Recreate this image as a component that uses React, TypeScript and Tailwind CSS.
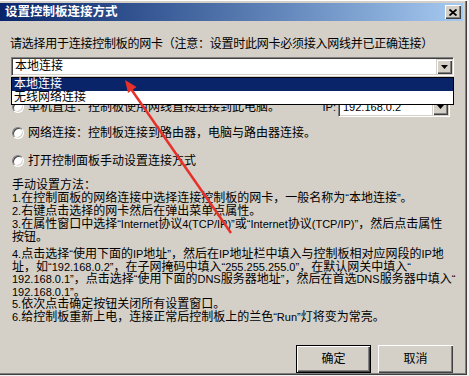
import React from "react";

const T = ({ s }: { s: string }) => {
  const parts = s.split(/([\x20-\x7E“”]+)/);
  return (
    <>
      {parts.map((p, i) =>
        i % 2 === 1 ? (
          <span key={i} className="text-[11px]">
            {p}
          </span>
        ) : (
          <React.Fragment key={i}>{p}</React.Fragment>
        )
      )}
    </>
  );
};

const DropBtn = () => (
  <div className="w-[16px] h-full bg-[#d4d0c8] flex items-center justify-center shadow-[inset_1px_1px_0_#d4d0c8,inset_2px_2px_0_#ffffff,inset_-1px_-1px_0_#404040,inset_-2px_-2px_0_#808080]">
    <svg width="7" height="4" viewBox="0 0 7 4">
      <path d="M0 0H7L3.5 4Z" fill="#000" />
    </svg>
  </div>
);

const Radio = () => (
  <div className="w-[12px] h-[12px] rounded-full bg-white border border-t-[#808080] border-l-[#808080] border-r-white border-b-white shadow-[inset_1px_1px_0_#404040,inset_-1px_-1px_0_#d4d0c8] shrink-0" />
);

export default function App() {
  return (
    <div className="w-[469px] h-[376px] relative overflow-hidden bg-[#f2f2f2] text-black text-[12px] font-['Liberation_Sans','Noto_Sans_CJK_SC',sans-serif]">
      <div className="w-[467px] h-[375px] bg-[#d4d0c8] flex flex-col shadow-[inset_0_1px_0_#ffffff,inset_-1px_-1px_0_#404040,inset_-2px_-2px_0_#808080]">
        <div className="h-[3px]" />
        {/* Title bar */}
        <div className="h-[18px] mr-[4px] bg-linear-to-r from-[#0a246a] to-[#a6caf0] flex items-center justify-between pl-[5px] pr-[2px]">
          <span className="text-white font-bold text-[12.5px] leading-[18px]">设置控制板连接方式</span>
          <div className="w-[16px] h-[14px] bg-[#d4d0c8] flex items-center justify-center shadow-[inset_1px_1px_0_#ffffff,inset_-1px_-1px_0_#404040,inset_-2px_-2px_0_#808080]">
            <svg width="8" height="7" viewBox="0 0 8 7">
              <path d="M0.5 0.5L7.5 6.5M7.5 0.5L0.5 6.5" stroke="#000" strokeWidth="1.8" />
            </svg>
          </div>
        </div>

        {/* Body */}
        <div className="flex flex-col pl-[11px]">
          <div className="mt-[16px] h-[14px] leading-[14px] -ml-[1px] tracking-[-0.25px] whitespace-nowrap">
            请选择用于连接控制板的网卡（注意：设置时此网卡必须接入网线并已正确连接）
          </div>

          {/* Combo */}
          <div className="mt-[6px] w-[443px] h-[19px] bg-white flex items-stretch border border-t-[#808080] border-l-[#808080] border-b-white border-r-white shadow-[inset_1px_1px_0_#404040,inset_-1px_-1px_0_#d4d0c8] p-[1px]">
            <div className="flex-1 pl-[2px] leading-[15px]">本地连接</div>
            <DropBtn />
          </div>

          {/* Radio 1 */}
          <div className="mt-[21px] w-[439px] h-[20px] flex items-center justify-between">
            <div className="flex items-center gap-[4px] ml-[1px]">
              <Radio />
              <span className="whitespace-nowrap">单机直连：控制板使用网线直接连接到此电脑。</span>
            </div>
            <div className="flex items-center gap-[2px] h-full">
              <span className="text-[11px]">IP:</span>
              <div className="w-[112px] h-[20px] bg-white flex items-stretch border border-t-[#808080] border-l-[#808080] border-b-white border-r-white shadow-[inset_1px_1px_0_#404040,inset_-1px_-1px_0_#d4d0c8] p-[1px]">
                <div className="flex-1 pl-[3px] text-[11px] leading-[16px]">192.168.0.2</div>
                <DropBtn />
              </div>
            </div>
          </div>

          {/* Radio 2 */}
          <div className="mt-[9px] h-[14px] flex items-center gap-[4px] ml-[1px]">
            <Radio />
            <span className="whitespace-nowrap leading-[14px]">网络连接：控制板连接到路由器，电脑与路由器连接。</span>
          </div>

          {/* Radio 3 */}
          <div className="mt-[14px] h-[14px] flex items-center gap-[4px] ml-[1px]">
            <Radio />
            <span className="whitespace-nowrap leading-[14px]">打开控制面板手动设置连接方式</span>
          </div>

          {/* Instructions */}
          <div className="mt-[11px] ml-[1px] whitespace-nowrap leading-[13px]">
            <div>手动设置方法：</div>
            <div><T s="1.在控制面板的网络连接中选择连接控制板的网卡，一般名称为“本地连接”。" /></div>
            <div><T s="2.右键点击选择的网卡然后在弹出菜单点属性。" /></div>
            <div><T s="3.在属性窗口中选择“Internet协议4(TCP/IP)”或“Internet协议(TCP/IP)”，然后点击属性" /></div>
            <div>按钮。</div>
          </div>
          <div className="mt-[4px] ml-[1px] whitespace-nowrap leading-[12.6px]">
            <div><T s="4.点击选择“使用下面的IP地址”，然后在IP地址栏中填入与控制板相对应网段的IP地" /></div>
            <div><T s="址，如“192.168.0.2”，在子网掩码中填入“255.255.255.0”，在默认网关中填入“" /></div>
            <div><T s="192.168.0.1”，点击选择“使用下面的DNS服务器地址”，然后在首选DNS服务器中填入“" /></div>
            <div><T s="192.168.0.1”。" /></div>
            <div><T s="5.依次点击确定按钮关闭所有设置窗口。" /></div>
            <div><T s="6.给控制板重新上电，连接正常后控制板上的兰色“Run”灯将变为常亮。" /></div>
          </div>

          {/* Buttons */}
          <div className="mt-[21px] flex justify-end gap-[7px] pr-[14px]">
            <div className="w-[75px] h-[28px] border border-black flex items-center justify-center bg-[#d4d0c8] shadow-[inset_1px_1px_0_#ffffff,inset_-1px_-1px_0_#404040,inset_-2px_-2px_0_#808080]">
              确定
            </div>
            <div className="w-[75px] h-[28px] flex items-center justify-center bg-[#d4d0c8] shadow-[inset_1px_1px_0_#ffffff,inset_-1px_-1px_0_#404040,inset_-2px_-2px_0_#808080]">
              取消
            </div>
          </div>
        </div>
      </div>

      {/* Open dropdown list */}
      <div className="absolute left-[11px] top-[77px] w-[443px] bg-white border border-black">
        <div className="h-[13px] leading-[13px] pl-[2px] bg-[#0a246a] text-white">本地连接</div>
        <div className="h-[13px] leading-[13px] pl-[2px]">无线网络连接</div>
      </div>

      {/* Red annotation arrow */}
      <svg className="absolute left-0 top-0 pointer-events-none" width="469" height="376" viewBox="0 0 469 376">
        <line x1="231" y1="233" x2="131" y2="89" stroke="#e8302a" strokeWidth="2.5" />
        <path d="M125 80L136.5 87L128 93Z" fill="#e8302a" />
      </svg>
    </div>
  );
}
